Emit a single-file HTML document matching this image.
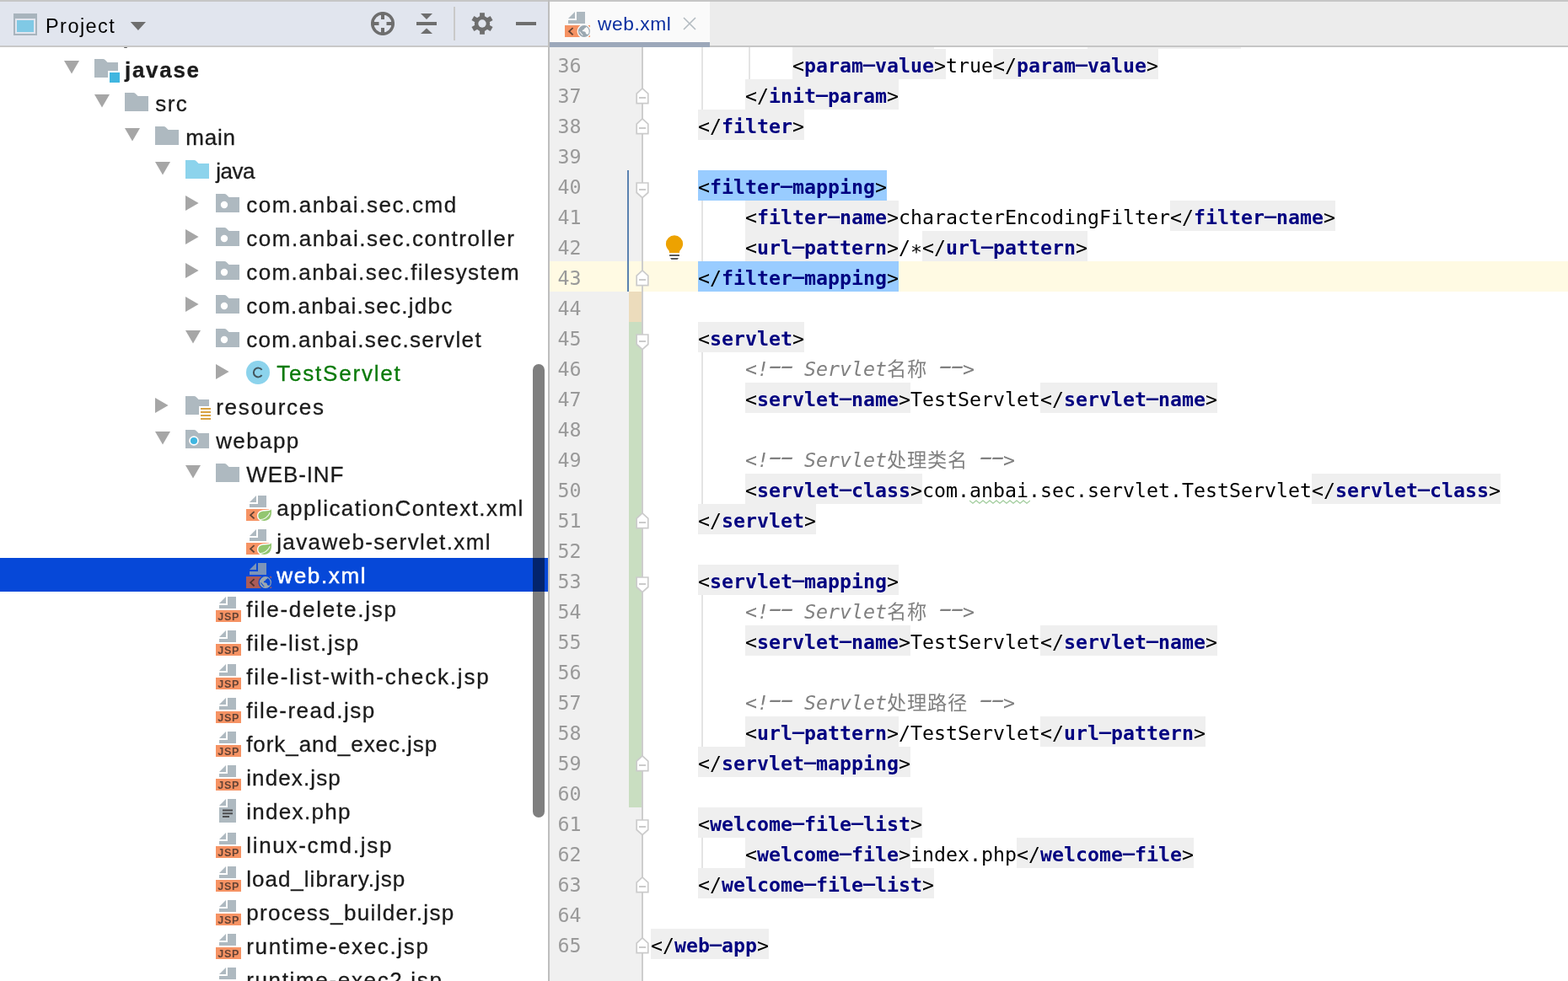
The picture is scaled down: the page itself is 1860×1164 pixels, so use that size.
<!DOCTYPE html>
<html lang="zh"><head><meta charset="utf-8"><title>web.xml - javase</title>
<style>
*{box-sizing:border-box}
html,body{margin:0;padding:0}
body{width:1860px;height:1164px;overflow:hidden;background:#fff;position:relative;font-family:"Liberation Sans",sans-serif}
#app{position:absolute;left:0;top:0;width:1860px;height:1164px;overflow:hidden;background:#fff}
.hdrL{position:absolute;left:0;top:0;width:650px;height:56px;background:#e1e5ee;border-top:2px solid #c6c6c6;border-bottom:2px solid #c9c9c9}
.hdrR{position:absolute;left:652px;top:0;width:1208px;height:56px;background:#ececec;border-top:2px solid #c6c6c6;border-bottom:2px solid #c6c6c6}
.tab{position:absolute;left:652px;top:2px;width:190px;height:48px;background:#fafafa}
.tabu{position:absolute;left:652px;top:50px;width:190px;height:6px;background:#9ca8ba}
.vdiv{position:absolute;left:650px;top:0;width:2px;height:1164px;background:#bebebe}
.ht{will-change:transform;position:absolute;height:52px;line-height:52px;font-size:23.5px;letter-spacing:1px;color:#000;white-space:pre}
.tt{color:#0a2fa0}
#tree{position:absolute;left:0;top:56px;width:650px;height:1108px;overflow:hidden;background:#fff}
#tree>.in{position:absolute;left:0;top:-56px;width:650px;height:1164px;will-change:transform}
.t{position:absolute;height:40px;line-height:42px;font-size:26px;color:#1b1b1b;white-space:pre;-webkit-text-stroke:.3px #1b1b1b}
.tb{font-weight:bold}
.tg2{}
.t.tg{color:#0a7a0a;-webkit-text-stroke-color:#0a7a0a}
.t.ts{color:#fff;-webkit-text-stroke:.5px #fff}
.sel{position:absolute;left:0;width:650px;height:40px;background:#0648d8}
.sb{position:absolute;left:632px;top:432px;width:14px;height:538px;border-radius:7px;background:rgba(0,0,0,.5)}
#ed{position:absolute;left:652px;top:56px;width:1208px;height:1108px;overflow:hidden;background:#fff}
#ed>.in{position:absolute;left:-652px;top:-56px;width:1860px;height:1164px;will-change:transform}
.gut{position:absolute;left:652px;top:0;width:109px;height:1164px;background:#f0f0f0}
.gdiv{position:absolute;left:761px;top:0;width:2px;height:1164px;background:#cdcdcd}
.ig{position:absolute;width:2px;background:#e4e4e4}
.ln{position:absolute;left:652px;width:37.500px;text-align:right;height:36px;font:23.25px "DejaVu Sans Mono","Liberation Mono",monospace;line-height:40px;color:#999}
.cl{position:absolute;height:36px;font:23.25px "DejaVu Sans Mono","Liberation Mono","Noto Sans CJK SC",monospace;line-height:40px;color:#000;white-space:pre}
.hy{display:inline-block;font-style:inherit;transform:translateY(-2px) scale(2,.75);transform-origin:50% 62%}
.cm .hy{transform:translate(1.5px,-3.2px) scale(2.1,1.15)}
.cl .tg{display:inline-block;height:36px;background:#efefef;vertical-align:top}
.cl .tg.hl{background:#99ccff}
.cl b{color:#000080;font-weight:bold}
.as{position:relative;top:5px}
.cm{color:#808080;font-style:italic}
.cj{font-style:normal;letter-spacing:.75px;line-height:0;font-family:"Noto Sans CJK SC","DejaVu Sans Mono",sans-serif}
</style></head>
<body><div id="app">
<div id="tree"><div class="in">
<svg style="position:absolute;left:76px;top:72px" width="18" height="16" viewBox="0 0 18 16"><path d="M0 0H18L9 15.6Z" fill="#a6a6a6"/></svg>
<svg style="position:absolute;left:112px;top:62px;overflow:visible" width="32" height="40" viewBox="0 0 32 40" ><path d="M0 8H10.2Q11.6 8 12.6 9L15.6 12H28V22H16V30H0Z" fill="#9AA7B0" fill-opacity=".8"/><rect x="18" y="24" width="12" height="12" fill="#40B6E0"/></svg>
<div class="t tb" style="left:148px;top:62px;letter-spacing:1.7px">javase</div>
<svg style="position:absolute;left:112px;top:112px" width="18" height="16" viewBox="0 0 18 16"><path d="M0 0H18L9 15.6Z" fill="#a6a6a6"/></svg>
<svg style="position:absolute;left:148px;top:102px;overflow:visible" width="32" height="40" viewBox="0 0 32 40" ><path d="M0 8H10.2Q11.6 8 12.6 9L15.6 12H28V30H0Z" fill="#9AA7B0" fill-opacity=".8"/></svg>
<div class="t" style="left:184.2px;top:102px;letter-spacing:1.5px">src</div>
<svg style="position:absolute;left:148px;top:152px" width="18" height="16" viewBox="0 0 18 16"><path d="M0 0H18L9 15.6Z" fill="#a6a6a6"/></svg>
<svg style="position:absolute;left:184px;top:142px;overflow:visible" width="32" height="40" viewBox="0 0 32 40" ><path d="M0 8H10.2Q11.6 8 12.6 9L15.6 12H28V30H0Z" fill="#9AA7B0" fill-opacity=".8"/></svg>
<div class="t" style="left:220.2px;top:142px;letter-spacing:0.831px">main</div>
<svg style="position:absolute;left:184px;top:192px" width="18" height="16" viewBox="0 0 18 16"><path d="M0 0H18L9 15.6Z" fill="#a6a6a6"/></svg>
<svg style="position:absolute;left:220px;top:182px;overflow:visible" width="32" height="40" viewBox="0 0 32 40" ><path d="M0 8H10.2Q11.6 8 12.6 9L15.6 12H28V30H0Z" fill="#40B6E0" fill-opacity=".6"/></svg>
<div class="t" style="left:256.2px;top:182px;letter-spacing:-0.499px">java</div>
<svg style="position:absolute;left:220px;top:232px" width="16" height="18" viewBox="0 0 16 18"><path d="M0 0V18L15.6 9Z" fill="#a6a6a6"/></svg>
<svg style="position:absolute;left:256px;top:222px;overflow:visible" width="32" height="40" viewBox="0 0 32 40" ><path fill-rule="evenodd" d="M0 8H10.2Q11.6 8 12.6 9L15.6 12H28V30H0ZM10 16.8a4.2 4.2 0 1 0 0 8.4a4.2 4.2 0 1 0 0-8.4Z" fill="#9AA7B0" fill-opacity=".8"/></svg>
<div class="t" style="left:292.2px;top:222px;letter-spacing:1.559px">com.anbai.sec.cmd</div>
<svg style="position:absolute;left:220px;top:272px" width="16" height="18" viewBox="0 0 16 18"><path d="M0 0V18L15.6 9Z" fill="#a6a6a6"/></svg>
<svg style="position:absolute;left:256px;top:262px;overflow:visible" width="32" height="40" viewBox="0 0 32 40" ><path fill-rule="evenodd" d="M0 8H10.2Q11.6 8 12.6 9L15.6 12H28V30H0ZM10 16.8a4.2 4.2 0 1 0 0 8.4a4.2 4.2 0 1 0 0-8.4Z" fill="#9AA7B0" fill-opacity=".8"/></svg>
<div class="t" style="left:292.2px;top:262px;letter-spacing:1.564px">com.anbai.sec.controller</div>
<svg style="position:absolute;left:220px;top:312px" width="16" height="18" viewBox="0 0 16 18"><path d="M0 0V18L15.6 9Z" fill="#a6a6a6"/></svg>
<svg style="position:absolute;left:256px;top:302px;overflow:visible" width="32" height="40" viewBox="0 0 32 40" ><path fill-rule="evenodd" d="M0 8H10.2Q11.6 8 12.6 9L15.6 12H28V30H0ZM10 16.8a4.2 4.2 0 1 0 0 8.4a4.2 4.2 0 1 0 0-8.4Z" fill="#9AA7B0" fill-opacity=".8"/></svg>
<div class="t" style="left:292.2px;top:302px;letter-spacing:1.439px">com.anbai.sec.filesystem</div>
<svg style="position:absolute;left:220px;top:352px" width="16" height="18" viewBox="0 0 16 18"><path d="M0 0V18L15.6 9Z" fill="#a6a6a6"/></svg>
<svg style="position:absolute;left:256px;top:342px;overflow:visible" width="32" height="40" viewBox="0 0 32 40" ><path fill-rule="evenodd" d="M0 8H10.2Q11.6 8 12.6 9L15.6 12H28V30H0ZM10 16.8a4.2 4.2 0 1 0 0 8.4a4.2 4.2 0 1 0 0-8.4Z" fill="#9AA7B0" fill-opacity=".8"/></svg>
<div class="t" style="left:292.2px;top:342px;letter-spacing:1.262px">com.anbai.sec.jdbc</div>
<svg style="position:absolute;left:220px;top:392px" width="18" height="16" viewBox="0 0 18 16"><path d="M0 0H18L9 15.6Z" fill="#a6a6a6"/></svg>
<svg style="position:absolute;left:256px;top:382px;overflow:visible" width="32" height="40" viewBox="0 0 32 40" ><path fill-rule="evenodd" d="M0 8H10.2Q11.6 8 12.6 9L15.6 12H28V30H0ZM10 16.8a4.2 4.2 0 1 0 0 8.4a4.2 4.2 0 1 0 0-8.4Z" fill="#9AA7B0" fill-opacity=".8"/></svg>
<div class="t" style="left:292.2px;top:382px;letter-spacing:1.35px">com.anbai.sec.servlet</div>
<svg style="position:absolute;left:256px;top:432px" width="16" height="18" viewBox="0 0 16 18"><path d="M0 0V18L15.6 9Z" fill="#a6a6a6"/></svg>
<svg style="position:absolute;left:292px;top:422px;overflow:visible" width="32" height="40" viewBox="0 0 32 40" ><circle cx="14" cy="20" r="14" fill="#40B6E0" fill-opacity=".6"/><path d="M18.6 23.2a5.4 5.4 0 1 1 0-6.4" fill="none" stroke="#231F20" stroke-opacity=".7" stroke-width="2"/></svg>
<div class="t tg" style="left:328.2px;top:422px;letter-spacing:1.8px">TestServlet</div>
<svg style="position:absolute;left:184px;top:472px" width="16" height="18" viewBox="0 0 16 18"><path d="M0 0V18L15.6 9Z" fill="#a6a6a6"/></svg>
<svg style="position:absolute;left:220px;top:462px;overflow:visible" width="32" height="40" viewBox="0 0 32 40" ><path d="M0 8H10.2Q11.6 8 12.6 9L15.6 12H28V20H16V30H0Z" fill="#9AA7B0" fill-opacity=".8"/><path d="M18 22h12v2h-12zM18 26h12v2h-12zM18 30h12v2h-12zM18 34h12v2h-12z" fill="#D9A343"/></svg>
<div class="t" style="left:256.2px;top:462px;letter-spacing:1.695px">resources</div>
<svg style="position:absolute;left:184px;top:512px" width="18" height="16" viewBox="0 0 18 16"><path d="M0 0H18L9 15.6Z" fill="#a6a6a6"/></svg>
<svg style="position:absolute;left:220px;top:502px;overflow:visible" width="32" height="40" viewBox="0 0 32 40" ><path fill-rule="evenodd" d="M0 8H10.2Q11.6 8 12.6 9L15.6 12H28V30H0ZM10 15.2a5.8 5.8 0 1 0 0 11.6a5.8 5.8 0 1 0 0-11.6Z" fill="#9AA7B0" fill-opacity=".8"/><circle cx="10" cy="21" r="4.1" fill="#40B6E0"/></svg>
<div class="t" style="left:256.2px;top:502px;letter-spacing:1.4px">webapp</div>
<svg style="position:absolute;left:220px;top:552px" width="18" height="16" viewBox="0 0 18 16"><path d="M0 0H18L9 15.6Z" fill="#a6a6a6"/></svg>
<svg style="position:absolute;left:256px;top:542px;overflow:visible" width="32" height="40" viewBox="0 0 32 40" ><path d="M0 8H10.2Q11.6 8 12.6 9L15.6 12H28V30H0Z" fill="#9AA7B0" fill-opacity=".8"/></svg>
<div class="t" style="left:292.2px;top:542px;letter-spacing:0.916px">WEB-INF</div>
<svg style="position:absolute;left:292px;top:582px;overflow:visible" width="32" height="40" viewBox="0 0 32 40" ><path d="M4 14L12 6V14Z" fill="#9AA7B0" fill-opacity=".8"/><path d="M14 6H24V20H4V16H14Z" fill="#9AA7B0" fill-opacity=".8"/><path d="M0 22H27.500V30H22V36H0Z" fill="#F26522" fill-opacity=".7"/><path d="M9.600000000000001 25.1L5.1000000000000005 29.200000000000003L9.600000000000001 33.3" fill="none" stroke="#231F20" stroke-opacity=".7" stroke-width="1.8"/><path d="M30.6 20.600C32 28 30.600 37.200 21.400 37.200C16.600 37.200 13 34.200 13 30C13 25.200 17 23 22 23C26 23 29 22.800 30.600 20.600Z" fill="#fff"/><path d="M29.800 22.300C30.600 28.400 29.400 35.900 21.400 35.900C17.400 35.900 14.300 33.400 14.300 30C14.300 26 17.800 24.400 22 24.400C25.600 24.400 28.200 24.200 29.800 22.300Z" fill="#6DB33F" fill-opacity=".75"/><path d="M16.200 34.800C21.400 34.200 26 31.400 28.200 26.200" fill="none" stroke="#fff" stroke-opacity=".85" stroke-width="1.1"/></svg>
<div class="t" style="left:328.2px;top:582px;letter-spacing:1.457px">applicationContext.xml</div>
<svg style="position:absolute;left:292px;top:622px;overflow:visible" width="32" height="40" viewBox="0 0 32 40" ><path d="M4 14L12 6V14Z" fill="#9AA7B0" fill-opacity=".8"/><path d="M14 6H24V20H4V16H14Z" fill="#9AA7B0" fill-opacity=".8"/><path d="M0 22H27.500V30H22V36H0Z" fill="#F26522" fill-opacity=".7"/><path d="M9.600000000000001 25.1L5.1000000000000005 29.200000000000003L9.600000000000001 33.3" fill="none" stroke="#231F20" stroke-opacity=".7" stroke-width="1.8"/><path d="M30.6 20.600C32 28 30.600 37.200 21.400 37.200C16.600 37.200 13 34.200 13 30C13 25.200 17 23 22 23C26 23 29 22.800 30.600 20.600Z" fill="#fff"/><path d="M29.800 22.300C30.600 28.400 29.400 35.900 21.400 35.900C17.400 35.900 14.300 33.400 14.300 30C14.300 26 17.800 24.400 22 24.400C25.600 24.400 28.200 24.200 29.800 22.300Z" fill="#6DB33F" fill-opacity=".75"/><path d="M16.200 34.800C21.400 34.200 26 31.400 28.200 26.200" fill="none" stroke="#fff" stroke-opacity=".85" stroke-width="1.1"/></svg>
<div class="t" style="left:328.2px;top:622px;letter-spacing:1.39px">javaweb-servlet.xml</div>
<div class="sel" style="top:662px"></div>
<svg style="position:absolute;left:292px;top:662px;overflow:visible" width="32" height="40" viewBox="0 0 32 40" ><path d="M4 14L12 6V14Z" fill="#9AA7B0" fill-opacity=".8"/><path d="M14 6H24V20H4V16H14Z" fill="#9AA7B0" fill-opacity=".8"/><path d="M0 22H18.60A8.3 8.3 0 0 0 18.29 36H0ZM27.20 22H30V24.80A8.3 8.3 0 0 0 27.20 22ZM30 33.40V36H27.51A8.3 8.3 0 0 0 30 33.40Z" fill="#F26522" fill-opacity=".7"/><path d="M9.600000000000001 25.1L5.1000000000000005 29.200000000000003L9.600000000000001 33.3" fill="none" stroke="#231F20" stroke-opacity=".7" stroke-width="1.8"/><path fill-rule="evenodd" d="M15.90 29.10a7 7 0 1 0 14 0a7 7 0 1 0 -14 0ZM25.50 23.80L24.60 25.00 23.50 25.60 22.60 26.90 21.40 27.50 20.60 29.00 23.40 29.40 24.70 30.20 24.90 32.00 27.30 32.90A5.850 5.850 0 0 0 25.50 23.80ZM17.20 28.40L21.80 34.10 20.30 33.80 17.50 30.20Z" fill="#9AA7B0"/></svg>
<div class="t ts" style="left:328.2px;top:662px;letter-spacing:1.665px">web.xml</div>
<svg style="position:absolute;left:256px;top:702px;overflow:visible" width="32" height="40" viewBox="0 0 32 40" ><path d="M4 14L12 6V14Z" fill="#9AA7B0" fill-opacity=".8"/><path d="M14 6H24V20H4V16H14Z" fill="#9AA7B0" fill-opacity=".8"/><rect x="0" y="22" width="30" height="14" fill="#F26522" fill-opacity=".7"/><text x="15.2" y="33.6" text-anchor="middle" font-family="Liberation Sans, sans-serif" font-weight="bold" font-size="12.6" letter-spacing=".65" fill="#231F20" fill-opacity=".7">JSP</text></svg>
<div class="t" style="left:292.2px;top:702px;letter-spacing:1.749px">file-delete.jsp</div>
<svg style="position:absolute;left:256px;top:742px;overflow:visible" width="32" height="40" viewBox="0 0 32 40" ><path d="M4 14L12 6V14Z" fill="#9AA7B0" fill-opacity=".8"/><path d="M14 6H24V20H4V16H14Z" fill="#9AA7B0" fill-opacity=".8"/><rect x="0" y="22" width="30" height="14" fill="#F26522" fill-opacity=".7"/><text x="15.2" y="33.6" text-anchor="middle" font-family="Liberation Sans, sans-serif" font-weight="bold" font-size="12.6" letter-spacing=".65" fill="#231F20" fill-opacity=".7">JSP</text></svg>
<div class="t" style="left:292.2px;top:742px;letter-spacing:1.582px">file-list.jsp</div>
<svg style="position:absolute;left:256px;top:782px;overflow:visible" width="32" height="40" viewBox="0 0 32 40" ><path d="M4 14L12 6V14Z" fill="#9AA7B0" fill-opacity=".8"/><path d="M14 6H24V20H4V16H14Z" fill="#9AA7B0" fill-opacity=".8"/><rect x="0" y="22" width="30" height="14" fill="#F26522" fill-opacity=".7"/><text x="15.2" y="33.6" text-anchor="middle" font-family="Liberation Sans, sans-serif" font-weight="bold" font-size="12.6" letter-spacing=".65" fill="#231F20" fill-opacity=".7">JSP</text></svg>
<div class="t" style="left:292.2px;top:782px;letter-spacing:1.823px">file-list-with-check.jsp</div>
<svg style="position:absolute;left:256px;top:822px;overflow:visible" width="32" height="40" viewBox="0 0 32 40" ><path d="M4 14L12 6V14Z" fill="#9AA7B0" fill-opacity=".8"/><path d="M14 6H24V20H4V16H14Z" fill="#9AA7B0" fill-opacity=".8"/><rect x="0" y="22" width="30" height="14" fill="#F26522" fill-opacity=".7"/><text x="15.2" y="33.6" text-anchor="middle" font-family="Liberation Sans, sans-serif" font-weight="bold" font-size="12.6" letter-spacing=".65" fill="#231F20" fill-opacity=".7">JSP</text></svg>
<div class="t" style="left:292.2px;top:822px;letter-spacing:1.461px">file-read.jsp</div>
<svg style="position:absolute;left:256px;top:862px;overflow:visible" width="32" height="40" viewBox="0 0 32 40" ><path d="M4 14L12 6V14Z" fill="#9AA7B0" fill-opacity=".8"/><path d="M14 6H24V20H4V16H14Z" fill="#9AA7B0" fill-opacity=".8"/><rect x="0" y="22" width="30" height="14" fill="#F26522" fill-opacity=".7"/><text x="15.2" y="33.6" text-anchor="middle" font-family="Liberation Sans, sans-serif" font-weight="bold" font-size="12.6" letter-spacing=".65" fill="#231F20" fill-opacity=".7">JSP</text></svg>
<div class="t" style="left:292.2px;top:862px;letter-spacing:0.938px">fork_and_exec.jsp</div>
<svg style="position:absolute;left:256px;top:902px;overflow:visible" width="32" height="40" viewBox="0 0 32 40" ><path d="M4 14L12 6V14Z" fill="#9AA7B0" fill-opacity=".8"/><path d="M14 6H24V20H4V16H14Z" fill="#9AA7B0" fill-opacity=".8"/><rect x="0" y="22" width="30" height="14" fill="#F26522" fill-opacity=".7"/><text x="15.2" y="33.6" text-anchor="middle" font-family="Liberation Sans, sans-serif" font-weight="bold" font-size="12.6" letter-spacing=".65" fill="#231F20" fill-opacity=".7">JSP</text></svg>
<div class="t" style="left:292.2px;top:902px;letter-spacing:1.125px">index.jsp</div>
<svg style="position:absolute;left:256px;top:942px;overflow:visible" width="32" height="40" viewBox="0 0 32 40" ><path d="M4 14L12 6V14Z" fill="#9AA7B0" fill-opacity=".8"/><path d="M14 6H24V34H4V16H14Z" fill="#9AA7B0" fill-opacity=".8"/><path d="M8 18.4h12v2h-12zM8 22.2h12v2h-12zM8 26h8v2h-8z" fill="#231F20" fill-opacity=".7"/></svg>
<div class="t" style="left:292.2px;top:942px;letter-spacing:1.312px">index.php</div>
<svg style="position:absolute;left:256px;top:982px;overflow:visible" width="32" height="40" viewBox="0 0 32 40" ><path d="M4 14L12 6V14Z" fill="#9AA7B0" fill-opacity=".8"/><path d="M14 6H24V20H4V16H14Z" fill="#9AA7B0" fill-opacity=".8"/><rect x="0" y="22" width="30" height="14" fill="#F26522" fill-opacity=".7"/><text x="15.2" y="33.6" text-anchor="middle" font-family="Liberation Sans, sans-serif" font-weight="bold" font-size="12.6" letter-spacing=".65" fill="#231F20" fill-opacity=".7">JSP</text></svg>
<div class="t" style="left:292.2px;top:982px;letter-spacing:1.705px">linux-cmd.jsp</div>
<svg style="position:absolute;left:256px;top:1022px;overflow:visible" width="32" height="40" viewBox="0 0 32 40" ><path d="M4 14L12 6V14Z" fill="#9AA7B0" fill-opacity=".8"/><path d="M14 6H24V20H4V16H14Z" fill="#9AA7B0" fill-opacity=".8"/><rect x="0" y="22" width="30" height="14" fill="#F26522" fill-opacity=".7"/><text x="15.2" y="33.6" text-anchor="middle" font-family="Liberation Sans, sans-serif" font-weight="bold" font-size="12.6" letter-spacing=".65" fill="#231F20" fill-opacity=".7">JSP</text></svg>
<div class="t" style="left:292.2px;top:1022px;letter-spacing:1.003px">load_library.jsp</div>
<svg style="position:absolute;left:256px;top:1062px;overflow:visible" width="32" height="40" viewBox="0 0 32 40" ><path d="M4 14L12 6V14Z" fill="#9AA7B0" fill-opacity=".8"/><path d="M14 6H24V20H4V16H14Z" fill="#9AA7B0" fill-opacity=".8"/><rect x="0" y="22" width="30" height="14" fill="#F26522" fill-opacity=".7"/><text x="15.2" y="33.6" text-anchor="middle" font-family="Liberation Sans, sans-serif" font-weight="bold" font-size="12.6" letter-spacing=".65" fill="#231F20" fill-opacity=".7">JSP</text></svg>
<div class="t" style="left:292.2px;top:1062px;letter-spacing:1.301px">process_builder.jsp</div>
<svg style="position:absolute;left:256px;top:1102px;overflow:visible" width="32" height="40" viewBox="0 0 32 40" ><path d="M4 14L12 6V14Z" fill="#9AA7B0" fill-opacity=".8"/><path d="M14 6H24V20H4V16H14Z" fill="#9AA7B0" fill-opacity=".8"/><rect x="0" y="22" width="30" height="14" fill="#F26522" fill-opacity=".7"/><text x="15.2" y="33.6" text-anchor="middle" font-family="Liberation Sans, sans-serif" font-weight="bold" font-size="12.6" letter-spacing=".65" fill="#231F20" fill-opacity=".7">JSP</text></svg>
<div class="t" style="left:292.2px;top:1102px;letter-spacing:1.668px">runtime-exec.jsp</div>
<svg style="position:absolute;left:256px;top:1142px;overflow:visible" width="32" height="40" viewBox="0 0 32 40" ><path d="M4 14L12 6V14Z" fill="#9AA7B0" fill-opacity=".8"/><path d="M14 6H24V20H4V16H14Z" fill="#9AA7B0" fill-opacity=".8"/><rect x="0" y="22" width="30" height="14" fill="#F26522" fill-opacity=".7"/><text x="15.2" y="33.6" text-anchor="middle" font-family="Liberation Sans, sans-serif" font-weight="bold" font-size="12.6" letter-spacing=".65" fill="#231F20" fill-opacity=".7">JSP</text></svg>
<div class="t" style="left:292.2px;top:1142px;letter-spacing:1.655px">runtime-exec2.jsp</div>
<div style="position:absolute;left:147px;top:56px;width:4px;height:1.2px;background:#5a5a5a;border-radius:0 0 2px 2px"></div>
<div class="sb"></div>
</div></div>
<div id="ed"><div class="in">
<div style="position:absolute;left:652px;top:310px;width:1208px;height:36px;background:#fffae3"></div>
<div class="gut"></div>
<div style="position:absolute;left:652px;top:310px;width:109px;height:36px;background:#fffae3"></div>
<div style="position:absolute;left:746px;top:346px;width:15px;height:36px;background:#ecdcbc"></div>
<div style="position:absolute;left:746px;top:382px;width:15px;height:576px;background:#c9dec1"></div>
<div style="position:absolute;left:744px;top:202px;width:2px;height:144px;background:#5a82b0"></div>
<div class="gdiv"></div>
<div class="ig" style="left:832px;top:56px;height:74px"></div>
<div class="ig" style="left:888px;top:56px;height:38px"></div>
<div class="ig" style="left:832px;top:238px;height:72px"></div>
<div class="ig" style="left:832px;top:418px;height:180px"></div>
<div class="ig" style="left:832px;top:706px;height:180px"></div>
<div class="ig" style="left:832px;top:994px;height:36px"></div>
<div class="cl" style="left:940px;top:22px"><span class="tg">&lt;<b>param<i class="hy">-</i>name</b>&gt;</span>forceEncoding<span class="tg">&lt;/<b>param<i class="hy">-</i>name</b>&gt;</span></div>
<div class="ln" style="top:58px">36</div>
<div class="cl" style="left:940px;top:58px"><span class="tg">&lt;<b>param<i class="hy">-</i>value</b>&gt;</span>true<span class="tg">&lt;/<b>param<i class="hy">-</i>value</b>&gt;</span></div>
<div class="ln" style="top:94px">37</div>
<div class="cl" style="left:884px;top:94px"><span class="tg">&lt;/<b>init<i class="hy">-</i>param</b>&gt;</span></div>
<div class="ln" style="top:130px">38</div>
<div class="cl" style="left:828px;top:130px"><span class="tg">&lt;/<b>filter</b>&gt;</span></div>
<div class="ln" style="top:166px">39</div>
<div class="ln" style="top:202px">40</div>
<div class="cl" style="left:828px;top:202px"><span class="tg hl">&lt;<b>filter<i class="hy">-</i>mapping</b>&gt;</span></div>
<div class="ln" style="top:238px">41</div>
<div class="cl" style="left:884px;top:238px"><span class="tg">&lt;<b>filter<i class="hy">-</i>name</b>&gt;</span>characterEncodingFilter<span class="tg">&lt;/<b>filter<i class="hy">-</i>name</b>&gt;</span></div>
<div class="ln" style="top:274px">42</div>
<div class="cl" style="left:884px;top:274px"><span class="tg">&lt;<b>url<i class="hy">-</i>pattern</b>&gt;</span>/<span class="as">*</span><span class="tg">&lt;/<b>url<i class="hy">-</i>pattern</b>&gt;</span></div>
<div class="ln" style="top:310px">43</div>
<div class="cl" style="left:828px;top:310px"><span class="tg hl">&lt;/<b>filter<i class="hy">-</i>mapping</b>&gt;</span></div>
<div class="ln" style="top:346px">44</div>
<div class="ln" style="top:382px">45</div>
<div class="cl" style="left:828px;top:382px"><span class="tg">&lt;<b>servlet</b>&gt;</span></div>
<div class="ln" style="top:418px">46</div>
<div class="cl" style="left:884px;top:418px"><span class="cm">&lt;!<i class="hy">-</i><i class="hy">-</i> Servlet<span class="cj">名称</span> <i class="hy">-</i><i class="hy">-</i>&gt;</span></div>
<div class="ln" style="top:454px">47</div>
<div class="cl" style="left:884px;top:454px"><span class="tg">&lt;<b>servlet<i class="hy">-</i>name</b>&gt;</span>TestServlet<span class="tg">&lt;/<b>servlet<i class="hy">-</i>name</b>&gt;</span></div>
<div class="ln" style="top:490px">48</div>
<div class="ln" style="top:526px">49</div>
<div class="cl" style="left:884px;top:526px"><span class="cm">&lt;!<i class="hy">-</i><i class="hy">-</i> Servlet<span class="cj">处理类名</span> <i class="hy">-</i><i class="hy">-</i>&gt;</span></div>
<div class="ln" style="top:562px">50</div>
<div class="cl" style="left:884px;top:562px"><span class="tg">&lt;<b>servlet<i class="hy">-</i>class</b>&gt;</span>com.anbai.sec.servlet.TestServlet<span class="tg">&lt;/<b>servlet<i class="hy">-</i>class</b>&gt;</span></div>
<div class="ln" style="top:598px">51</div>
<div class="cl" style="left:828px;top:598px"><span class="tg">&lt;/<b>servlet</b>&gt;</span></div>
<div class="ln" style="top:634px">52</div>
<div class="ln" style="top:670px">53</div>
<div class="cl" style="left:828px;top:670px"><span class="tg">&lt;<b>servlet<i class="hy">-</i>mapping</b>&gt;</span></div>
<div class="ln" style="top:706px">54</div>
<div class="cl" style="left:884px;top:706px"><span class="cm">&lt;!<i class="hy">-</i><i class="hy">-</i> Servlet<span class="cj">名称</span> <i class="hy">-</i><i class="hy">-</i>&gt;</span></div>
<div class="ln" style="top:742px">55</div>
<div class="cl" style="left:884px;top:742px"><span class="tg">&lt;<b>servlet<i class="hy">-</i>name</b>&gt;</span>TestServlet<span class="tg">&lt;/<b>servlet<i class="hy">-</i>name</b>&gt;</span></div>
<div class="ln" style="top:778px">56</div>
<div class="ln" style="top:814px">57</div>
<div class="cl" style="left:884px;top:814px"><span class="cm">&lt;!<i class="hy">-</i><i class="hy">-</i> Servlet<span class="cj">处理路径</span> <i class="hy">-</i><i class="hy">-</i>&gt;</span></div>
<div class="ln" style="top:850px">58</div>
<div class="cl" style="left:884px;top:850px"><span class="tg">&lt;<b>url<i class="hy">-</i>pattern</b>&gt;</span>/TestServlet<span class="tg">&lt;/<b>url<i class="hy">-</i>pattern</b>&gt;</span></div>
<div class="ln" style="top:886px">59</div>
<div class="cl" style="left:828px;top:886px"><span class="tg">&lt;/<b>servlet<i class="hy">-</i>mapping</b>&gt;</span></div>
<div class="ln" style="top:922px">60</div>
<div class="ln" style="top:958px">61</div>
<div class="cl" style="left:828px;top:958px"><span class="tg">&lt;<b>welcome<i class="hy">-</i>file<i class="hy">-</i>list</b>&gt;</span></div>
<div class="ln" style="top:994px">62</div>
<div class="cl" style="left:884px;top:994px"><span class="tg">&lt;<b>welcome<i class="hy">-</i>file</b>&gt;</span>index.php<span class="tg">&lt;/<b>welcome<i class="hy">-</i>file</b>&gt;</span></div>
<div class="ln" style="top:1030px">63</div>
<div class="cl" style="left:828px;top:1030px"><span class="tg">&lt;/<b>welcome<i class="hy">-</i>file<i class="hy">-</i>list</b>&gt;</span></div>
<div class="ln" style="top:1066px">64</div>
<div class="ln" style="top:1102px">65</div>
<div class="cl" style="left:772px;top:1102px"><span class="tg">&lt;/<b>web<i class="hy">-</i>app</b>&gt;</span></div>
<svg style="position:absolute;left:754.2px;top:216px" width="16" height="20" viewBox="0 0 15.6 20"><path d="M1 1H14.6V12.5L7.8 18.7L1 12.5Z" fill="#fff" stroke="#cbcbcb" stroke-width="1.7"/><rect x="3.8" y="8" width="8" height="2" fill="#cbcbcb"/></svg>
<svg style="position:absolute;left:754.2px;top:396px" width="16" height="20" viewBox="0 0 15.6 20"><path d="M1 1H14.6V12.5L7.8 18.7L1 12.5Z" fill="#fff" stroke="#cbcbcb" stroke-width="1.7"/><rect x="3.8" y="8" width="8" height="2" fill="#cbcbcb"/></svg>
<svg style="position:absolute;left:754.2px;top:684px" width="16" height="20" viewBox="0 0 15.6 20"><path d="M1 1H14.6V12.5L7.8 18.7L1 12.5Z" fill="#fff" stroke="#cbcbcb" stroke-width="1.7"/><rect x="3.8" y="8" width="8" height="2" fill="#cbcbcb"/></svg>
<svg style="position:absolute;left:754.2px;top:972px" width="16" height="20" viewBox="0 0 15.6 20"><path d="M1 1H14.6V12.5L7.8 18.7L1 12.5Z" fill="#fff" stroke="#cbcbcb" stroke-width="1.7"/><rect x="3.8" y="8" width="8" height="2" fill="#cbcbcb"/></svg>
<svg style="position:absolute;left:754.2px;top:104px" width="16" height="20" viewBox="0 0 15.6 20"><path d="M7.8 .9L14.6 7.2V18.7H1V7.2Z" fill="#fff" stroke="#cbcbcb" stroke-width="1.7"/><rect x="3.8" y="11" width="8" height="2" fill="#cbcbcb"/></svg>
<svg style="position:absolute;left:754.2px;top:140px" width="16" height="20" viewBox="0 0 15.6 20"><path d="M7.8 .9L14.6 7.2V18.7H1V7.2Z" fill="#fff" stroke="#cbcbcb" stroke-width="1.7"/><rect x="3.8" y="11" width="8" height="2" fill="#cbcbcb"/></svg>
<svg style="position:absolute;left:754.2px;top:320px" width="16" height="20" viewBox="0 0 15.6 20"><path d="M7.8 .9L14.6 7.2V18.7H1V7.2Z" fill="#fff" stroke="#cbcbcb" stroke-width="1.7"/><rect x="3.8" y="11" width="8" height="2" fill="#cbcbcb"/></svg>
<svg style="position:absolute;left:754.2px;top:608px" width="16" height="20" viewBox="0 0 15.6 20"><path d="M7.8 .9L14.6 7.2V18.7H1V7.2Z" fill="#fff" stroke="#cbcbcb" stroke-width="1.7"/><rect x="3.8" y="11" width="8" height="2" fill="#cbcbcb"/></svg>
<svg style="position:absolute;left:754.2px;top:896px" width="16" height="20" viewBox="0 0 15.6 20"><path d="M7.8 .9L14.6 7.2V18.7H1V7.2Z" fill="#fff" stroke="#cbcbcb" stroke-width="1.7"/><rect x="3.8" y="11" width="8" height="2" fill="#cbcbcb"/></svg>
<svg style="position:absolute;left:754.2px;top:1040px" width="16" height="20" viewBox="0 0 15.6 20"><path d="M7.8 .9L14.6 7.2V18.7H1V7.2Z" fill="#fff" stroke="#cbcbcb" stroke-width="1.7"/><rect x="3.8" y="11" width="8" height="2" fill="#cbcbcb"/></svg>
<svg style="position:absolute;left:754.2px;top:1112px" width="16" height="20" viewBox="0 0 15.6 20"><path d="M7.8 .9L14.6 7.2V18.7H1V7.2Z" fill="#fff" stroke="#cbcbcb" stroke-width="1.7"/><rect x="3.8" y="11" width="8" height="2" fill="#cbcbcb"/></svg>
<svg style="position:absolute;left:1150px;top:592.500px" width="72" height="6" viewBox="0 0 72 6"><polyline points="0,0.9 4,4.2 8,0.9 12,4.2 16,0.9 20,4.2 24,0.9 28,4.2 32,0.9 36,4.2 40,0.9 44,4.2 48,0.9 52,4.2 56,0.9 60,4.2 64,0.9 68,4.2 72,0.9" fill="none" stroke="#a6cfa2" stroke-width="1.3"/></svg>
<svg style="position:absolute;left:788px;top:278px" width="24" height="32" viewBox="0 0 24 32"><path d="M12 1.300a10.100 10.100 0 0 1 10.100 10.100c0 3.400-1.700 5.700-3.300 7.500c-.600.700-.800 1.700-.800 3.100H6c0-1.400-.200-2.400-.800-3.100c-1.600-1.800-3.300-4.100-3.300-7.500A10.100 10.100 0 0 1 12 1.300Z" fill="#eda200"/><rect x="6" y="24" width="12" height="2" rx=".6" fill="#595959"/><path d="M7 28h10l-1.400 2h-7.200Z" fill="#595959"/></svg>
</div></div>
<div class="hdrL"></div><div class="hdrR"></div>
<div class="tab"></div><div class="tabu"></div>
<svg style="position:absolute;left:0;top:0" width="650" height="56" viewBox="0 0 650 56"><rect x="16" y="16" width="28" height="26" fill="#9AA7B0" fill-opacity=".8"/><rect x="18" y="22" width="24" height="18" fill="#e1e5ee"/><rect x="20" y="24" width="20" height="14" fill="#40B6E0" fill-opacity=".6"/><path d="M154.800 26H173L163.900 36Z" fill="#6e6e6e"/><circle cx="454" cy="28" r="12.25" fill="none" stroke="#6e6e6e" stroke-width="3.5"/><path d="M454 14.500V23M454 33V41.500M440.500 28H449.500M458.500 28H467.500" stroke="#6e6e6e" stroke-width="4" fill="none"/><rect x="494" y="26" width="24" height="4" fill="#6e6e6e"/><path d="M499 16H513L506 23Z" fill="#6e6e6e"/><path d="M499 40H513L506 33.400Z" fill="#6e6e6e"/><rect x="538" y="8" width="2" height="40" fill="#c9c9c9"/><circle cx="572" cy="28" r="9.2" fill="#6e6e6e"/><rect x="569.1" y="15.2" width="5.8" height="6" fill="#6e6e6e" transform="rotate(0 572 28)"/><rect x="569.1" y="15.2" width="5.8" height="6" fill="#6e6e6e" transform="rotate(60 572 28)"/><rect x="569.1" y="15.2" width="5.8" height="6" fill="#6e6e6e" transform="rotate(120 572 28)"/><rect x="569.1" y="15.2" width="5.8" height="6" fill="#6e6e6e" transform="rotate(180 572 28)"/><rect x="569.1" y="15.2" width="5.8" height="6" fill="#6e6e6e" transform="rotate(240 572 28)"/><rect x="569.1" y="15.2" width="5.8" height="6" fill="#6e6e6e" transform="rotate(300 572 28)"/><circle cx="572" cy="28" r="4.7" fill="#e1e5ee"/><rect x="612" y="26" width="24" height="4" fill="#6e6e6e"/></svg>
<div class="ht" style="left:53.5px;top:4.5px;letter-spacing:1.45px">Project</div>
<svg style="position:absolute;left:670px;top:14px;overflow:visible" width="32" height="32" viewBox="0 0 32 32" ><path d="M4 8L12 0V8Z" fill="#9AA7B0" fill-opacity=".8"/><path d="M14 0H24V14H4V10H14Z" fill="#9AA7B0" fill-opacity=".8"/><path d="M0 16H18.60A8.3 8.3 0 0 0 18.29 30H0ZM27.20 16H30V18.80A8.3 8.3 0 0 0 27.20 16ZM30 27.40V30H27.51A8.3 8.3 0 0 0 30 27.40Z" fill="#F26522" fill-opacity=".7"/><path d="M9.600000000000001 19.1L5.1000000000000005 23.200000000000003L9.600000000000001 27.3" fill="none" stroke="#231F20" stroke-opacity=".7" stroke-width="1.8"/><path fill-rule="evenodd" d="M15.90 23.10a7 7 0 1 0 14 0a7 7 0 1 0 -14 0ZM25.50 17.80L24.60 19.00 23.50 19.60 22.60 20.90 21.40 21.50 20.60 23.00 23.40 23.40 24.70 24.20 24.90 26.00 27.30 26.90A5.850 5.850 0 0 0 25.50 17.80ZM17.20 22.40L21.80 28.10 20.30 27.80 17.50 24.20Z" fill="#9AA7B0"/></svg>
<div class="ht tt" style="left:708.5px;top:1.5px;font-size:22.800px;letter-spacing:.55px">web.xml</div>
<svg style="position:absolute;left:810px;top:20px" width="16" height="16" viewBox="0 0 16 16"><path d="M1 1L15 15M15 1L1 15" stroke="#b3bbc1" stroke-width="1.6" fill="none"/></svg>
<div class="vdiv"></div>
</div></body></html>
